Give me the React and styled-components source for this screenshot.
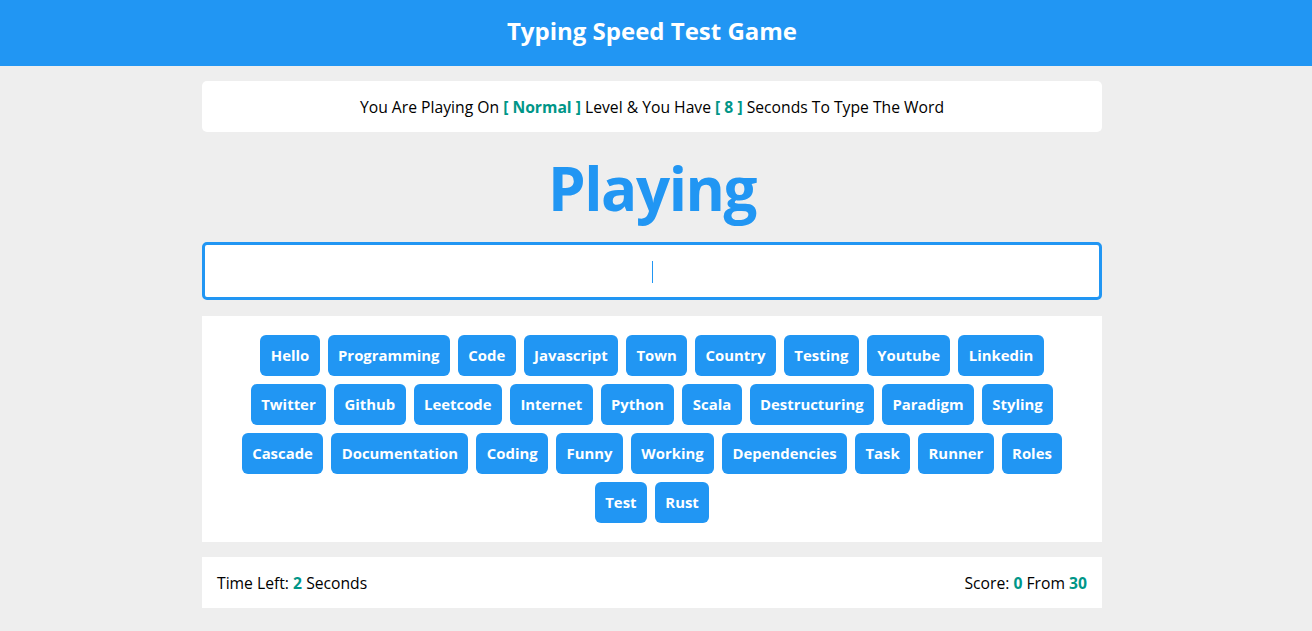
import React from "react";
import styled, { createGlobalStyle } from "styled-components";

const Global = createGlobalStyle`
  * { box-sizing: border-box; }
  body {
    margin: 0;
    background: #eeeeee;
    font-family: "Open Sans", "Noto Sans", sans-serif;
    color: #000;
  }
`;

const Header = styled.header`
  background: #2196f3;
  color: #fff;
  height: 66px;
  padding: 0 8px 5px 0;
  display: flex;
  align-items: center;
  justify-content: center;
  font-size: 24px;
  font-weight: 700;
`;

const Page = styled.div`
  padding-right: 8px;
`;

const Container = styled.main`
  width: 900px;
  margin: 15px auto 0;
  display: flex;
  flex-direction: column;
`;

const Message = styled.div`
  background: #fff;
  border-radius: 5px;
  height: 51px;
  display: flex;
  align-items: center;
  justify-content: center;
  font-size: 15.7px;
  white-space: pre;
`;

const Accent = styled.span`
  color: #009688;
  font-weight: 700;
`;

const Status = styled.h2`
  margin: 8px 0 5px;
  height: 97px;
  text-align: center;
  color: #2196f3;
  font-size: 60px;
  letter-spacing: -1.4px;
  font-weight: 700;
  line-height: 97px;
`;

const InputWrap = styled.div`
  position: relative;
`;

const Input = styled.input`
  display: block;
  height: 58px;
  width: 100%;
  border: 3px solid #2196f3;
  border-radius: 5px;
  outline: none;
  text-align: center;
  font-size: 20px;
  font-family: inherit;
  color: #2196f3;
  caret-color: transparent;
`;

const Caret = styled.span`
  position: absolute;
  left: 450px;
  top: 19px;
  width: 1px;
  height: 22px;
  background: #2196f3;
  pointer-events: none;
`;

const Words = styled.div`
  margin-top: 16px;
  background: #fff;
  padding: 19px 20px;
  display: flex;
  flex-wrap: wrap;
  justify-content: center;
  gap: 8px 8px;
`;

const Word = styled.span`
  background: #2196f3;
  color: #fff;
  font-weight: 700;
  font-size: 14.9px;
  line-height: 21px;
  padding: 10px 10.4px;
  border-radius: 6px;
`;

const Footer = styled.div`
  margin-top: 15px;
  background: #fff;
  height: 51px;
  padding: 0 15px;
  display: flex;
  align-items: center;
  justify-content: space-between;
  font-size: 15.7px;
  white-space: pre;
`;

const words = [
  "Hello","Programming","Code","Javascript","Town","Country","Testing","Youtube","Linkedin",
  "Twitter","Github","Leetcode","Internet","Python","Scala","Destructuring","Paradigm","Styling",
  "Cascade","Documentation","Coding","Funny","Working","Dependencies","Task","Runner","Roles",
  "Test","Rust",
];

export default function App() {
  return (
    <>
      <Global />
      <Header>Typing Speed Test Game</Header>
      <Page>
        <Container>
          <Message>
            You Are Playing On <Accent>[ Normal ]</Accent> Level &amp; You Have <Accent>[ 8 ]</Accent> Seconds To Type The Word
          </Message>
          <Status>Playing</Status>
          <InputWrap>
            <Input />
            <Caret />
          </InputWrap>
          <Words>
            {words.map((w) => <Word key={w}>{w}</Word>)}
          </Words>
          <Footer>
            <span>Time Left: <Accent>2</Accent> Seconds</span>
            <span>Score: <Accent>0</Accent> From <Accent>30</Accent></span>
          </Footer>
        </Container>
      </Page>
    </>
  );
}
